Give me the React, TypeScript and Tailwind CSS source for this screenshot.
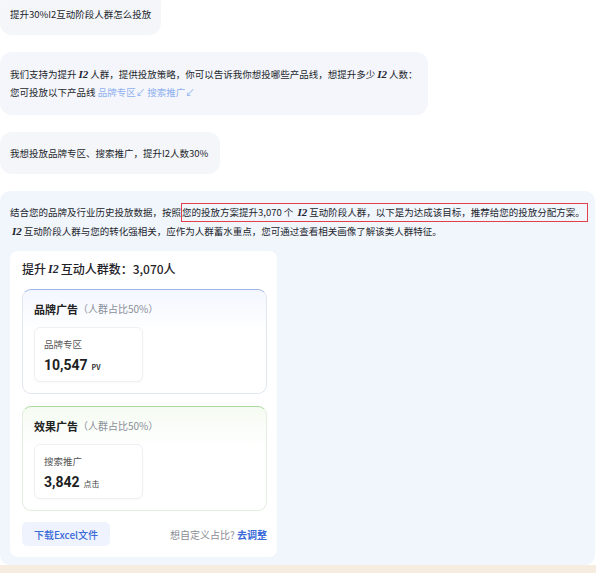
import React from "react"

const font = { fontFamily: '"Noto Sans CJK SC", "Noto Sans", sans-serif' }

function I2({ size = "text-[11px]" }: { size?: string }) {
  return (
    <span className={`${size} mx-[2px] font-bold italic font-['Liberation_Serif',serif] text-[#1f2533]`}>
      I2
    </span>
  )
}

function AdBlock({
  title,
  ratio,
  name,
  value,
  unit,
  tone,
}: {
  title: string
  ratio: string
  name: string
  value: string
  unit: string
  tone: "blue" | "green"
}) {
  const box =
    tone === "blue"
      ? "border-[#e1e6f0] border-t-[#9fb5e8] from-[#f4f7ff]"
      : "border-[#e3eee0] border-t-[#a9d99c] from-[#f5fbf2]"
  return (
    <div className={`rounded-[9px] border bg-gradient-to-b to-white to-40% px-[11px] pt-[11px] pb-[11px] ${box}`}>
      <div className="flex items-center leading-[16px]">
        <span className="text-[11px] font-bold text-[#222]">{title}</span>
        <span className="text-[10px] text-[#8a8f99]">（人群占比{ratio}）</span>
      </div>
      <div className="mt-[10px] h-[55px] w-[109px] rounded-[6px] border border-[#eef0f4] bg-white px-[9px] pt-[10px] shadow-[0_1px_2px_rgba(0,0,0,0.03)]">
        <div className="text-[9.5px] leading-[13px] text-[#555]">{name}</div>
        <div className="mt-[5px] flex items-baseline gap-[4px]">
          <span className="text-[14px] font-bold leading-[18px] text-[#1d1f24] font-['Roboto',sans-serif]">{value}</span>
          <span className={unit === "PV" ? "text-[7px] font-bold text-[#333]" : "text-[8px] text-[#444]"}>{unit}</span>
        </div>
      </div>
    </div>
  )
}

export default function App() {
  return (
    <div className="min-h-[573px] w-[596px] overflow-hidden bg-white text-[9.5px] text-[#23262c]" style={font}>
      <div className="flex flex-col items-start gap-[17px]">
        <div className="-mt-[8px] rounded-[12px] bg-[#f4f6fa] px-[10px] pt-[13px] pb-[12px] leading-[18px]">
          提升30%I2互动阶段人群怎么投放
        </div>

        <div className="w-fit rounded-[12px] bg-[#f4f6fb] pl-[10px] pr-[10px] pt-[13px] pb-[14px] leading-[18px]">
          <div className="whitespace-nowrap">
            我们支持为提升<I2 />人群，提供投放策略，你可以告诉我你想投哪些产品线，想提升多少<I2 />人数：
          </div>
          <div>
            您可投放以下产品线 <span className="text-[#8fb0ef]">品牌专区↙</span>{" "}
            <span className="text-[#8fb0ef]">搜索推广↙</span>
          </div>
        </div>

        <div className="w-[220px] rounded-[12px] bg-[#f4f6fa] px-[10px] py-[12px] leading-[18px]">
          我想投放品牌专区、搜索推广，提升I2人数30%
        </div>

        <div className="w-[595px] rounded-[10px] bg-[#f1f5fc] px-[10px] pt-[12px] pb-[8px] leading-[19px]">
          <div className="whitespace-nowrap">
            结合您的品牌及行业历史投放数据，按照
            <span className="inline-block border border-[#e0414c] pr-[2px] leading-[17px]">
              您的投放方案提升3,070 个 <I2 />互动阶段人群，以下是为达成该目标，推荐给您的投放分配方案。
            </span>
          </div>
          <div>
            <I2 />互动阶段人群与您的转化强相关，应作为人群蓄水重点，您可通过查看相关画像了解该类人群特征。
          </div>

          <div className="mt-[10px] w-[267px] rounded-[8px] bg-white pl-[12px] pr-[10px] pt-[9px] pb-[11px]">
            <div className="flex items-center text-[12px] font-medium leading-[18px] text-[#1f2228]">
              提升<I2 size="text-[12px]" />互动人群数：3,070人
            </div>
            <div className="mt-[11px] flex flex-col gap-[12px]">
              <AdBlock title="品牌广告" ratio="50%" name="品牌专区" value="10,547" unit="PV" tone="blue" />
              <AdBlock title="效果广告" ratio="50%" name="搜索推广" value="3,842" unit="点击" tone="green" />
            </div>
            <div className="mt-[11px] flex items-center justify-between">
              <button className="h-[24px] w-[88px] rounded-[5px] bg-[#eef3fd] text-[10px] font-medium text-[#3a6ad8]">
                下载Excel文件
              </button>
              <div className="text-[10px]">
                <span className="text-[#8a8d94]">想自定义占比? </span>
                <span className="font-bold text-[#3a6ad8]">去调整</span>
              </div>
            </div>
          </div>
        </div>
      </div>
      <div className="h-[8px] w-full bg-[#f6ede0]" />
    </div>
  )
}
